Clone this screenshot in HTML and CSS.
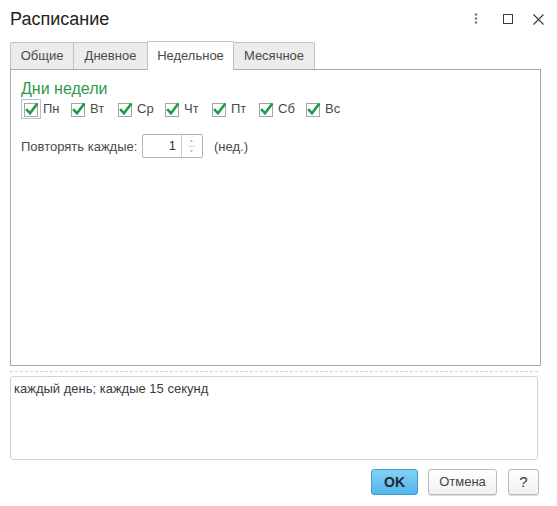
FILE: index.html
```html
<!DOCTYPE html>
<html lang="ru">
<head>
<meta charset="utf-8">
<title>Расписание</title>
<link rel="stylesheet" href="styles.css">
</head>
<body>
<div class="dialog">
  <div class="header">
    <div class="title">Расписание</div>
    <div class="win-icons">
      <span class="wicon"><svg width="6" height="12" viewBox="0 0 6 12"><circle cx="3" cy="1.5" r="1.3" fill="#7a7a7a"/><circle cx="3" cy="5.5" r="1.3" fill="#7a7a7a"/><circle cx="3" cy="9.5" r="1.3" fill="#7a7a7a"/></svg></span>
      <span class="wicon"><svg width="10" height="10" viewBox="0 0 10 10"><rect x="0.5" y="0.5" width="9" height="9" fill="none" stroke="#3a3a3a" stroke-width="1"/></svg></span>
      <span class="wicon"><svg width="11" height="11" viewBox="0 0 11 11"><path d="M0.5 0.5L10.5 10.5M10.5 0.5L0.5 10.5" stroke="#3a3a3a" stroke-width="1.1" fill="none"/></svg></span>
    </div>
  </div>
  <div class="tabs">
    <div class="tab w1">Общие</div>
    <div class="tab w2">Дневное</div>
    <div class="tab active w3">Недельное</div>
    <div class="tab w4">Месячное</div>
  </div>
  <div class="panel">
    <div class="group-title">Дни недели</div>
    <div class="days">
      <div class="day"><span class="cbw focus"><svg class="cb" width="16" height="16" viewBox="0 0 16 16"><rect x="1.5" y="2.5" width="13" height="13" fill="#fff" stroke="#a5a5a5"/><path d="M4 9L7 12.3L13.6 3.6" stroke="#1f9a48" stroke-width="2.6" fill="none" stroke-linecap="square"/></svg></span><span class="dl">Пн</span></div>
      <div class="day"><span class="cbw"><svg class="cb" width="16" height="16" viewBox="0 0 16 16"><rect x="1.5" y="2.5" width="13" height="13" fill="#fff" stroke="#a5a5a5"/><path d="M4 9L7 12.3L13.6 3.6" stroke="#1f9a48" stroke-width="2.6" fill="none" stroke-linecap="square"/></svg></span><span class="dl">Вт</span></div>
      <div class="day"><span class="cbw"><svg class="cb" width="16" height="16" viewBox="0 0 16 16"><rect x="1.5" y="2.5" width="13" height="13" fill="#fff" stroke="#a5a5a5"/><path d="M4 9L7 12.3L13.6 3.6" stroke="#1f9a48" stroke-width="2.6" fill="none" stroke-linecap="square"/></svg></span><span class="dl">Ср</span></div>
      <div class="day"><span class="cbw"><svg class="cb" width="16" height="16" viewBox="0 0 16 16"><rect x="1.5" y="2.5" width="13" height="13" fill="#fff" stroke="#a5a5a5"/><path d="M4 9L7 12.3L13.6 3.6" stroke="#1f9a48" stroke-width="2.6" fill="none" stroke-linecap="square"/></svg></span><span class="dl">Чт</span></div>
      <div class="day"><span class="cbw"><svg class="cb" width="16" height="16" viewBox="0 0 16 16"><rect x="1.5" y="2.5" width="13" height="13" fill="#fff" stroke="#a5a5a5"/><path d="M4 9L7 12.3L13.6 3.6" stroke="#1f9a48" stroke-width="2.6" fill="none" stroke-linecap="square"/></svg></span><span class="dl">Пт</span></div>
      <div class="day"><span class="cbw"><svg class="cb" width="16" height="16" viewBox="0 0 16 16"><rect x="1.5" y="2.5" width="13" height="13" fill="#fff" stroke="#a5a5a5"/><path d="M4 9L7 12.3L13.6 3.6" stroke="#1f9a48" stroke-width="2.6" fill="none" stroke-linecap="square"/></svg></span><span class="dl">Сб</span></div>
      <div class="day"><span class="cbw"><svg class="cb" width="16" height="16" viewBox="0 0 16 16"><rect x="1.5" y="2.5" width="13" height="13" fill="#fff" stroke="#a5a5a5"/><path d="M4 9L7 12.3L13.6 3.6" stroke="#1f9a48" stroke-width="2.6" fill="none" stroke-linecap="square"/></svg></span><span class="dl">Вс</span></div>
    </div>
    <div class="repeat">
      <span class="lbl">Повторять каждые:</span>
      <div class="spin">
        <span class="val">1</span>
        <span class="arrows"><svg width="19" height="22" viewBox="0 0 19 22"><path d="M8 6.5L9.5 5L11 6.5Z" fill="#8a8a8a"/><line x1="6" y1="11.5" x2="13" y2="11.5" stroke="#d4d4d4"/><path d="M8 15.5L9.5 17L11 15.5Z" fill="#8a8a8a"/></svg></span>
      </div>
      <span class="unit">(нед.)</span>
    </div>
  </div>
  <div class="sep"></div>
  <div class="desc">каждый день; каждые 15 секунд</div>
  <div class="buttons">
    <div class="btn ok">OK</div>
    <div class="btn cancel">Отмена</div>
    <div class="btn help">?</div>
  </div>
</div>
</body>
</html>
```
FILE: styles.css
```css
html, body {
  margin: 0;
  padding: 0;
  background: #fff;
}
body {
  font-family: "Liberation Sans", Arial, sans-serif;
  color: #4a4a4a;
  font-size: 13px;
}
.dialog {
  width: 557px;
  height: 506px;
  overflow: hidden;
}
.header {
  height: 41px;
  display: flex;
  align-items: flex-start;
  justify-content: space-between;
}
.title {
  font-size: 18px;
  line-height: 21px;
  color: #222;
  padding: 9px 0 0 10px;
}
.win-icons {
  display: flex;
  margin-right: 4px;
  padding-top: 13px;
}
.wicon {
  width: 30px;
  height: 12px;
  display: flex;
  align-items: center;
  justify-content: center;
}
.wicon:first-child { margin-right: 2px; }
.tabs {
  display: flex;
  align-items: flex-end;
  height: 28px;
  margin-left: 10px;
}
.tab {
  box-sizing: border-box;
  height: 27px;
  line-height: 25px;
  border: 1px solid #c2c2c2;
  border-bottom: none;
  border-radius: 2px 2px 0 0;
  background: #ececec;
  text-align: center;
  color: #4a4a4a;
  font-size: 13px;
}
.tab + .tab { margin-left: -1px; }
.tab.w1 { width: 64px; }
.tab.w2 { width: 75px; }
.tab.w3 { width: 87px; }
.tab.w4 { width: 82px; }
.tab.active {
  background: #fff;
  height: 29px;
  line-height: 27px;
  margin-bottom: -1px;
  position: relative;
  z-index: 1;
  border-color: #c2c2c2;
}
.panel {
  box-sizing: border-box;
  margin-left: 10px;
  width: 531px;
  height: 297px;
  border: 1px solid #a9a9a9;
  padding: 9px 10px 0 10px;
}
.group-title {
  font-size: 16px;
  line-height: 19px;
  color: #2e9a4c;
}
.days {
  display: flex;
  margin-top: 1px;
  height: 20px;
}
.day {
  display: flex;
  align-items: center;
  width: 47px;
}
.cbw {
  box-sizing: border-box;
  width: 20px;
  height: 20px;
  display: flex;
  align-items: center;
  justify-content: center;
  border: 1px solid transparent;
}
.cbw.focus {
  border-color: #a9c6d8;
}
.cb { display: block; margin-top: -1px; }
.dl {
  margin-left: 2px;
  line-height: 16px;
}
.repeat {
  display: flex;
  align-items: center;
  margin-top: 15px;
  height: 24px;
}
.lbl { width: 121px; }
.spin {
  box-sizing: border-box;
  width: 61px;
  height: 24px;
  border: 1px solid #b3b3b3;
  border-radius: 2px;
  display: flex;
}
.val {
  flex: 1;
  text-align: right;
  padding-right: 5px;
  line-height: 22px;
  color: #333;
  font-size: 13px;
}
.arrows {
  width: 20px;
  border-left: 1px solid #c9c9c9;
  display: flex;
  align-items: center;
}
.arrows svg { display: block; }
.unit { margin-left: 11px; }
.sep {
  margin: 5px 0 0 10px;
  width: 528px;
  border-top: 1px dashed #cfcfcf;
}
.desc {
  box-sizing: border-box;
  margin: 4px 0 0 10px;
  width: 528px;
  height: 84px;
  border: 1px solid #d2d2d2;
  border-radius: 3px;
  padding: 4px 3px;
  line-height: 16px;
  color: #3c3c3c;
}
.buttons {
  display: flex;
  justify-content: flex-end;
  margin: 9px 18px 0 0;
  gap: 10px;
}
.btn {
  box-sizing: border-box;
  height: 26px;
  border-radius: 3px;
  text-align: center;
  line-height: 24px;
  font-size: 13px;
}
.ok {
  width: 47px;
  background: linear-gradient(#82d1f6, #51b6ea);
  border: 1px solid #3f9fd2;
  color: #1e2a33;
  font-size: 14px;
  font-weight: bold;
}
.cancel {
  width: 69px;
  background: linear-gradient(#ffffff, #f1f1f1);
  border: 1px solid #bababa;
  color: #444;
  box-shadow: 0 1px 0 #dcdcdc;
}
.help {
  width: 31px;
  margin-left: 1px;
  background: linear-gradient(#ffffff, #f1f1f1);
  border: 1px solid #bababa;
  color: #333;
  font-size: 15px;
  box-shadow: 0 1px 0 #dcdcdc;
}
```
